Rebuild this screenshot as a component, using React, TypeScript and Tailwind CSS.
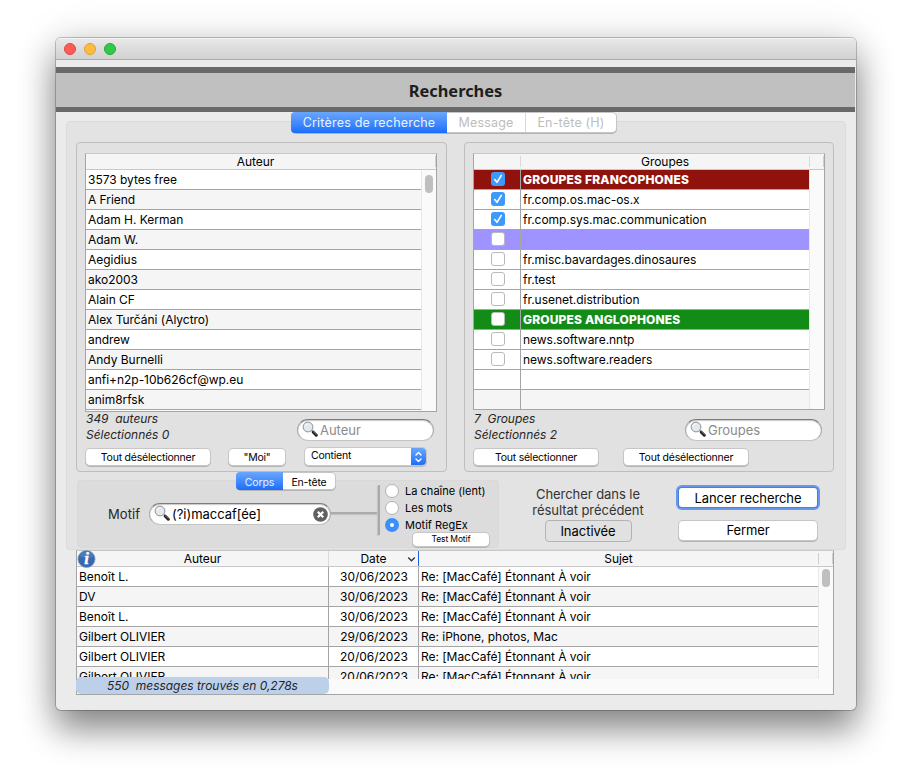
import { ReactNode } from "react";
import clsx from "clsx";

const authors = [
  "3573 bytes free",
  "A Friend",
  "Adam H. Kerman",
  "Adam W.",
  "Aegidius",
  "ako2003",
  "Alain CF",
  "Alex Turčáni (Alyctro)",
  "andrew",
  "Andy Burnelli",
  "anfi+n2p-10b626cf@wp.eu",
  "anim8rfsk",
];

type Group = { name: string; checked?: boolean; color?: string; empty?: boolean };

const groups: Group[] = [
  { name: "GROUPES FRANCOPHONES", checked: true, color: "bg-[#8f130c]" },
  { name: "fr.comp.os.mac-os.x", checked: true },
  { name: "fr.comp.sys.mac.communication", checked: true },
  { name: "", color: "bg-[#9f93ff]" },
  { name: "fr.misc.bavardages.dinosaures" },
  { name: "fr.test" },
  { name: "fr.usenet.distribution" },
  { name: "GROUPES ANGLOPHONES", color: "bg-[#128c16]" },
  { name: "news.software.nntp" },
  { name: "news.software.readers" },
  { name: "", empty: true },
  { name: "", empty: true },
];

const messages = [
  { author: "Benoît L.", date: "30/06/2023", subject: "Re: [MacCafé] Étonnant À voir" },
  { author: "DV", date: "30/06/2023", subject: "Re: [MacCafé] Étonnant À voir" },
  { author: "Benoît L.", date: "30/06/2023", subject: "Re: [MacCafé] Étonnant À voir" },
  { author: "Gilbert OLIVIER", date: "29/06/2023", subject: "Re: iPhone, photos, Mac" },
  { author: "Gilbert OLIVIER", date: "20/06/2023", subject: "Re: [MacCafé] Étonnant À voir" },
  { author: "Gilbert OLIVIER", date: "20/06/2023", subject: "Re: [MacCafé] Étonnant À voir" },
];

function Button({ className, children }: { className?: string; children: ReactNode }) {
  return (
    <button
      className={clsx(
        "flex items-center justify-center rounded-[4px] bg-white whitespace-nowrap shadow-[0_0_0_1px_#c6c6c6,0_1px_0_1px_#b4b4b4]",
        className
      )}
    >
      {children}
    </button>
  );
}

function Magnifier() {
  return (
    <svg className="w-4 h-4 -mt-[2px] shrink-0" viewBox="0 0 16 16" fill="none">
      <path d="M9.6 9.6l1.5 1.5" stroke="#777" strokeWidth="1.4" />
      <path d="M11.3 11.2l3 3" stroke="#222" strokeWidth="3" strokeLinecap="round" />
      <path d="M11.4 10.7l3 2.8" stroke="#888" strokeWidth="0.7" strokeLinecap="round" />
      <circle cx="6" cy="6" r="4.9" fill="#e3e9ed" stroke="#85878a" strokeWidth="0.9" />
      <path d="M3 5.5a3.2 3.2 0 0 1 3.3-2.7" stroke="#fff" strokeWidth="1" />
    </svg>
  );
}

function SearchField({ className, children }: { className?: string; children: ReactNode }) {
  return (
    <div
      className={clsx(
        "flex items-center h-[22px] rounded-full bg-white border border-[#a9a9a9] border-t-[#7b7b7b] border-b-[#c4c4c4] pl-1 shadow-[inset_0_1px_1px_#c9c9c9]",
        className
      )}
    >
      <Magnifier />
      {children}
    </div>
  );
}

function Checkbox({ checked }: { checked?: boolean }) {
  if (checked) {
    return (
      <span className="flex w-3.5 h-3.5 rounded-[3px] bg-[#3d99fa]">
        <svg className="w-3.5 h-3.5" viewBox="0 0 14 14" fill="none">
          <path d="M3.7 7.5l2.3 2.8 4.3-6.9" stroke="#fff" strokeWidth="1.6" strokeLinecap="round" strokeLinejoin="round" />
        </svg>
      </span>
    );
  }
  return <span className="w-3.5 h-3.5 rounded-[3px] bg-white border border-[#b9b9b9]" />;
}

function Radio({ label, on }: { label: string; on?: boolean }) {
  return (
    <div className="flex items-start h-[17px] gap-[6px]">
      {on ? (
        <span className="flex items-center justify-center w-3.5 h-3.5 rounded-full bg-[#3b8ffb]">
          <span className="w-1 h-1 rounded-full bg-white" />
        </span>
      ) : (
        <span className="w-3.5 h-3.5 rounded-full bg-white border border-[#b2b2b2]" />
      )}
      <span className="text-[11px] leading-[15px] tracking-[0.02px] whitespace-nowrap">{label}</span>
    </div>
  );
}

function AuthorPanel() {
  return (
    <section className="w-[371px] h-[330px] border border-[#bebebe] rounded-[4px] bg-[#e1e1e1] pl-2 pt-[10px]">
      <div className="w-[352px] h-[259px] border border-[#a5a5a5] border-t-[#c8c8c8] bg-[#fafafa]">
        <div className="flex h-4 bg-[#f5f5f5] border-b border-[#c8c8c8]">
          <div className="w-[339px] text-center leading-[16px]">Auteur</div>
          <div className="flex-1 my-[2px] border-r border-[#cfcfcf]" />
        </div>
        <div className="flex h-[241px]">
          <div className="w-[336px] border-r border-[#e8e8e8]">
            {authors.map((name, i) => (
              <div
                key={name}
                className={clsx("h-5 pl-[2px] border-b border-[#a5a5a5] leading-[20px]", i % 2 ? "bg-[#f5f5f5]" : "bg-white")}
              >
                {name}
              </div>
            ))}
          </div>
          <div className="pl-[3px] pt-[5px]">
            <div className="w-2 h-[18px] rounded-full bg-[#bfbfbf]" />
          </div>
        </div>
      </div>
      <div className="flex justify-between h-[34px] pr-3">
        <div className="italic leading-4 -mt-px pl-px text-[#262626] whitespace-pre">{"349  auteurs\nSélectionnés 0"}</div>
        <SearchField className="w-[137px] mt-[7px]">
          <span className="ml-[2px] pt-px text-[13px] text-[#8b8b8b]">Auteur</span>
        </SearchField>
      </div>
      <div className="flex text-[10.5px] tracking-[-0.22px] pt-[3px]">
        <Button className="ml-px w-[124px] h-4 pt-[2px]">Tout désélectionner</Button>
        <Button className="ml-[19px] w-14 h-4 pt-[2px]">"Moi"</Button>
        <div className="flex ml-5 -mt-px w-[121px] h-[17px] rounded-[4px] overflow-hidden bg-white shadow-[0_0_0_1px_#c9c9c9,0_1px_0_1px_#b6b6b6]">
          <span className="flex-1 pl-[6px] leading-[16px]">Contient</span>
          <span className="flex items-center justify-center w-[15px] bg-gradient-to-b from-[#69a6fb] to-[#1a6dfa]">
            <svg width="9" height="12" viewBox="0 0 9 12" fill="none" stroke="#fff" strokeWidth="1.4" strokeLinecap="round" strokeLinejoin="round">
              <path d="M2 4l2.5-2.5L7 4M2 8l2.5 2.5L7 8" />
            </svg>
          </span>
        </div>
      </div>
    </section>
  );
}

function GroupPanel() {
  return (
    <section className="w-[370px] h-[330px] border border-[#bebebe] rounded-[4px] bg-[#e1e1e1] pl-2 pt-[10px]">
      <div className="w-[352px] h-[257px] border border-[#a5a5a5] border-t-[#c8c8c8] bg-[#fafafa]">
        <div className="flex h-4 bg-[#f5f5f5] border-b border-[#c8c8c8]">
          <div className="w-[47px] my-[2px] border-r border-[#dadada]" />
          <div className="w-[289px] my-[2px] text-center leading-[12px] border-r border-[#dadada]">Groupes</div>
          <div className="flex-1 my-[2px] border-r border-[#cfcfcf]" />
        </div>
        <div className="w-[336px] h-[239px] overflow-hidden border-r border-[#e8e8e8]">
          {groups.map((g, i) => (
            <div
              key={i}
              className={clsx(
                "flex h-5 border-b border-[#a5a5a5] leading-[20px]",
                g.color ?? (i === 11 ? "bg-[#f5f5f5]" : "bg-white"),
                g.color && "text-white font-extrabold tracking-[0.16px]"
              )}
            >
              <div className="flex items-start justify-center w-[47px] pt-[2px] pl-[2px] border-r border-[#a5a5a5]">
                {!g.empty && <Checkbox checked={g.checked} />}
              </div>
              <div className="pl-[2px]">{g.name}</div>
            </div>
          ))}
        </div>
      </div>
      <div className="flex justify-between h-9 pr-[11px]">
        <div className="italic leading-4 pt-px pl-px text-[#262626] whitespace-pre">{"7  Groupes\nSélectionnés 2"}</div>
        <SearchField className="w-[137px] mt-[9px]">
          <span className="ml-[2px] pt-px text-[13px] text-[#8b8b8b]">Groupes</span>
        </SearchField>
      </div>
      <div className="flex text-[10.5px] tracking-[-0.22px] pt-[3px]">
        <Button className="ml-px w-[124px] h-4 pt-[2px]">Tout sélectionner</Button>
        <Button className="ml-[26px] w-[124px] h-4 pt-[2px]">Tout désélectionner</Button>
      </div>
    </section>
  );
}

function PatternPanel() {
  return (
    <div className="w-[422px] ml-px">
      <div className="relative z-10 flex w-[98px] h-4 ml-[160px] mt-px -mb-[9px] rounded-[4px] bg-white text-[10.5px] tracking-[-0.15px] shadow-[0_0_0_1px_#c6c6c6,0_1px_0_1px_#b4b4b4]">
        <div className="w-[47px] h-[18px] -ml-px -mt-px rounded-l-[4px] bg-gradient-to-b from-[#69a6fb] to-[#1a6dfa] text-[#e6f0ff] text-center leading-[21px]">Corps</div>
        <div className="flex-1 text-center leading-[19px]">En-tête</div>
      </div>
      <div className="flex h-[68px] rounded-[4px] bg-[#dcdcdc] border border-[#d9d9d9]">
        <span className="ml-[30px] w-[41px] pt-[23px] text-[13px] leading-5 tracking-[0.1px] text-[#262626]">Motif</span>
        <SearchField className="w-[182px] mt-[22px]">
          <span className="ml-[2px] pt-px flex-1 text-[13px]">(?i)maccaf[ée]</span>
          <svg className="mr-[2px]" width="15" height="15" viewBox="0 0 15 15">
            <circle cx="7.5" cy="7.5" r="7.3" fill="#616161" />
            <path d="M4.8 4.8l5.4 5.4M10.2 4.8l-5.4 5.4" stroke="#fff" strokeWidth="2.2" />
          </svg>
        </SearchField>
        <div className="w-[47px] h-[2px] mt-[31px] bg-[#ababab] shadow-[0_1px_1px_#c0c0c0]" />
        <div className="w-[2px] h-[50px] mt-1 bg-[#a8a8a8] shadow-[-1px_1px_1px_#c4c4c4]" />
        <div className="ml-[5px] pt-[3px]">
          <Radio label="La chaîne (lent)" />
          <Radio label="Les mots" />
          <Radio label="Motif RegEx" on />
          <Button className="ml-7 -mt-[2px] w-[76px] h-[13px] text-[8.5px] tracking-[-0.12px]">Test Motif</Button>
        </div>
      </div>
    </div>
  );
}

function Actions() {
  return (
    <div className="flex pt-[14px]">
      <div className="flex flex-col items-center w-[140px] ml-[19px]">
        <p className="text-[13px] leading-4 text-center text-[#333] tracking-[-0.06px] whitespace-nowrap">
          Chercher dans le
          <br />
          résultat précédent
        </p>
        <button className="w-[87px] h-[22px] mt-[2px] rounded-[4px] border border-[#b3b3b3] bg-[#e1e1e1] text-[13px] leading-5">Inactivée</button>
      </div>
      <div className="flex flex-col ml-[21px] text-[13px] tracking-[-0.08px]">
        <button className="w-[138px] h-[19px] rounded-[3px] bg-white shadow-[0_0_0_1px_#4d7fd6,0_0_0_3px_#6797ea] mt-[2px] leading-[20px]">Lancer recherche</button>
        <Button className="w-[138px] h-[19px] mt-[14px]">Fermer</Button>
      </div>
    </div>
  );
}

function Results() {
  return (
    <div className="relative w-[758px] h-[145px] ml-5 border border-[#a5a5a5] border-t-[#c8c8c8] bg-[#fafafa] tracking-[-0.03px]">
      <div className="flex h-4 bg-[#f5f5f5] border-b border-[#c8c8c8] leading-[16px] text-center">
        <div className="w-[252px] border-r border-[#dadada]">Auteur</div>
        <div className="relative w-[90px] border-r border-[#1f62e0]">
          Date
          <svg className="absolute right-[2px] top-[5px]" width="9" height="7" viewBox="0 0 9 7" fill="none" stroke="#333" strokeWidth="1.3">
            <path d="M1.2 1.5l3.3 3.3 3.3-3.3" />
          </svg>
        </div>
        <div className="w-[399px]">Sujet</div>
        <div className="flex-1 my-[2px] border-x border-[#cfcfcf]" />
      </div>
      <div className="flex h-[112px] overflow-hidden">
        <div className="w-[742px] border-r border-[#e8e8e8]">
          {messages.map((m, i) => (
            <div key={i} className={clsx("flex h-5 border-b border-[#a5a5a5] leading-[20px]", i % 2 ? "bg-[#f5f5f5]" : "bg-white")}>
              <div className="w-[252px] pl-[2px] border-r border-[#a5a5a5]">{m.author}</div>
              <div className="w-[90px] pl-px text-center border-r border-[#a5a5a5]">{m.date}</div>
              <div className="pl-[2px]">{m.subject}</div>
            </div>
          ))}
        </div>
        <div className="pl-[3px] pt-[2px]">
          <div className="w-2 h-[18px] rounded-full bg-[#bfbfbf]" />
        </div>
      </div>
      {/* status pill over the bottom left corner */}
      <div className="absolute -left-px bottom-0 w-[253px] h-[17px] rounded-[5px] bg-[#bdd0e9] italic text-center leading-[17px] whitespace-pre text-[#262626]">
        {"550  messages trouvés en 0,278s"}
      </div>
      <svg className="absolute left-0 -top-px" width="19" height="18" viewBox="0 0 19 18">
        <circle cx="9.5" cy="9" r="8.6" fill="#3868ae" stroke="#8ea6c4" strokeWidth="0.8" />
        <path d="M2.5 6.5a7.3 7.3 0 0 1 14 0q-7 3-14 0z" fill="#4a7abb" />
        <text x="9.5" y="14.2" textAnchor="middle" fill="#fff" stroke="#fff" strokeWidth="0.4" fontFamily="Liberation Serif, serif" fontWeight="bold" fontStyle="italic" fontSize="17">i</text>
      </svg>
    </div>
  );
}

export default function App() {
  return (
    <div className="w-[912px] h-[784px] overflow-hidden bg-white pl-14 pt-[38px] font-['Inter',sans-serif] text-[12px] text-black">
      <div className="w-[800px] h-[672px] rounded-[5px] bg-[#ebebeb] shadow-[0_0_0_1px_rgba(0,0,0,0.22),0_20px_34px_rgba(0,0,0,0.42),0_2px_40px_rgba(0,0,0,0.16)]">
        <div className="flex items-center h-[22px] gap-2 pl-2 rounded-t-[5px] bg-gradient-to-b from-[#e8e8e8] to-[#d1d1d1] border-t border-t-[#f4f4f4] border-b border-b-[#ababab]">
          <span className="w-3 h-3 rounded-full bg-[#fc5b57] border border-[#e2463f]" />
          <span className="w-3 h-3 rounded-full bg-[#fdbc40] border border-[#e0a034]" />
          <span className="w-3 h-3 rounded-full bg-[#34c84a] border border-[#27aa35]" />
        </div>
        <h1 className="flex items-center justify-center w-[799px] h-[45px] mt-[7px] pt-[2px] border-t-[6px] border-b-[5px] border-[#696969] bg-[#c0c0c0] font-['Noto_Sans',sans-serif] text-[16.4px] font-bold text-[#1e1e1e]">
          Recherches
        </h1>
        <div className="relative z-10 flex w-[324px] h-[19px] mt-px ml-[236px] -mb-[11px] rounded-[4px] bg-white text-[12.5px] text-[#bdbdbd] text-center leading-[20px] tracking-[0.19px] shadow-[0_0_0_1px_#c6c6c6,0_1px_0_1px_#b4b4b4]">
          <div className="w-[156px] h-[21px] -ml-px -mt-px rounded-l-[4px] bg-gradient-to-b from-[#69a6fb] to-[#1a6dfa] text-[#eaf2ff] leading-[22px]">Critères de recherche</div>
          <div className="w-[79px] border-r border-[#d9d9d9]">Message</div>
          <div className="flex-1">En-tête (H)</div>
        </div>
        <main className="w-[780px] h-[429px] ml-[10px] rounded-[4px] bg-[#e3e3e3] border border-[#dbdbdb] pl-[9px] pt-5 tracking-[-0.03px]">
          <div className="flex gap-[17px]">
            <AuthorPanel />
            <GroupPanel />
          </div>
          <div className="flex">
            <PatternPanel />
            <Actions />
          </div>
        </main>
        <Results />
      </div>
    </div>
  );
}
